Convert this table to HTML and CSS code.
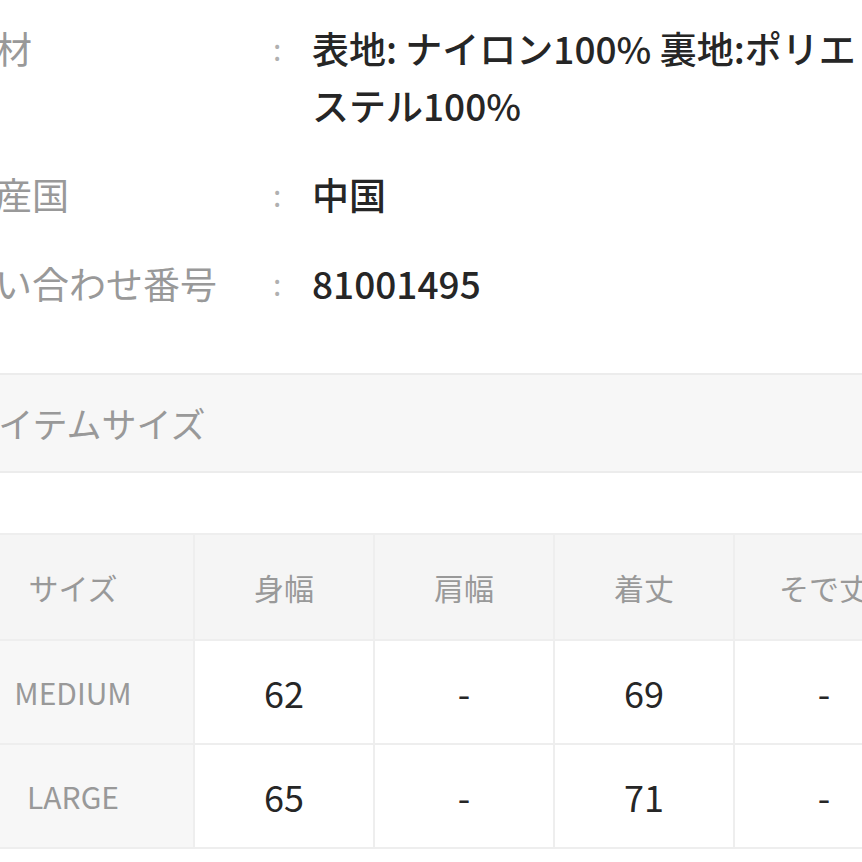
FILE: index.html
```html
<!DOCTYPE html>
<html lang="ja">
<head>
<meta charset="utf-8">
<link rel="stylesheet" href="styles.css">
</head>
<body>
<div class="page">
  <dl class="specs">
    <div class="spec-row">
      <dt class="spec-label">素材</dt>
      <dd class="spec-colon">:</dd>
      <dd class="spec-value">表地: ナイロン100% 裏地:ポリエステル100%</dd>
    </div>
    <div class="spec-row">
      <dt class="spec-label">原産国</dt>
      <dd class="spec-colon">:</dd>
      <dd class="spec-value">中国</dd>
    </div>
    <div class="spec-row">
      <dt class="spec-label">問い合わせ番号</dt>
      <dd class="spec-colon">:</dd>
      <dd class="spec-value">81001495</dd>
    </div>
  </dl>

  <div class="section-head">アイテムサイズ</div>

  <table class="size-table">
    <colgroup>
      <col class="col-size">
      <col class="col-data">
      <col class="col-data">
      <col class="col-data">
      <col class="col-data">
    </colgroup>
    <thead>
      <tr>
        <th>サイズ</th>
        <th>身幅</th>
        <th>肩幅</th>
        <th>着丈</th>
        <th>そで丈</th>
      </tr>
    </thead>
    <tbody>
      <tr>
        <th class="row-label">MEDIUM</th>
        <td>62</td>
        <td>-</td>
        <td>69</td>
        <td>-</td>
      </tr>
      <tr>
        <th class="row-label">LARGE</th>
        <td>65</td>
        <td>-</td>
        <td>71</td>
        <td>-</td>
      </tr>
    </tbody>
  </table>
</div>
</body>
</html>
```

FILE: styles.css
```css
html, body {
  margin: 0;
  padding: 0;
  background: #ffffff;
}

body {
  width: 862px;
  height: 862px;
  overflow: hidden;
  font-family: "Noto Sans CJK JP", "Noto Sans", sans-serif;
  color: #222;
}

.page {
  width: 862px;
}

.specs {
  margin: 0;
  padding-top: 20px;
}

.spec-row {
  display: grid;
  grid-template-columns: 312px 42px 556px;
  margin-left: -42px;
  margin-bottom: 32px;
}

.spec-label {
  margin: 0;
  font-size: 37px;
  line-height: 57px;
  color: #999999;
  white-space: nowrap;
}

.spec-colon {
  margin: 0;
  font-size: 30px;
  line-height: 57px;
  color: #b0b0b0;
  padding-left: 3px;
}

.spec-value {
  margin: 0;
  font-size: 37px;
  font-weight: 500;
  line-height: 57px;
  color: #262626;
}

.section-head {
  margin-top: 61px;
  margin-left: -60px;
  width: 960px;
  height: 96px;
  box-sizing: content-box;
  padding-left: 25px;
  border-top: 2px solid #ececec;
  border-bottom: 2px solid #ececec;
  background: #f7f7f7;
  font-size: 35px;
  line-height: 96px;
  color: #999999;
}

.size-table {
  margin-top: 60px;
  margin-left: -49px;
  border-collapse: collapse;
  table-layout: fixed;
  width: 962px;
}

.col-size {
  width: 242px;
}

.col-data {
  width: 180px;
}

.size-table th,
.size-table td {
  border: 2px solid #eeeeee;
  text-align: center;
  padding: 0;
}

.size-table thead th {
  height: 104px;
  background: #f5f5f5;
  font-size: 30px;
  font-weight: normal;
  color: #999999;
}

.size-table tbody tr {
  height: 104px;
}

.size-table .row-label {
  background: #f7f7f7;
  font-size: 30px;
  font-weight: normal;
  color: #999999;
}

.size-table td {
  background: #ffffff;
  font-size: 36px;
  color: #262626;
}
```
